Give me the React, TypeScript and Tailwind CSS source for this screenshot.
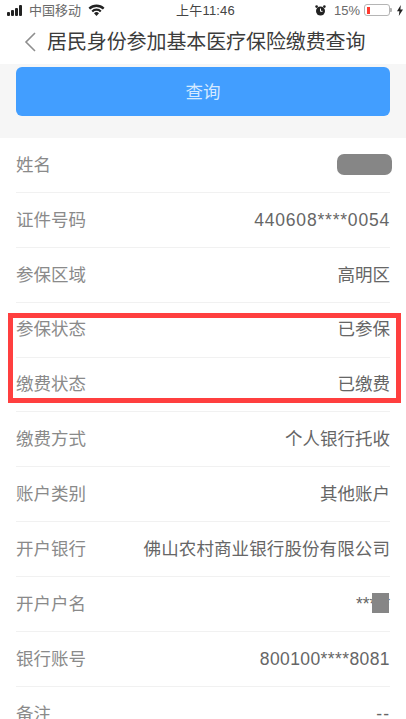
import React from "react";

const rows: { label: string; value: string; mask?: string; tracking?: string }[] = [
  { label: "姓名", value: "", mask: "name" },
  { label: "证件号码", value: "440608****0054", tracking: "tracking-[0.8px]" },
  { label: "参保区域", value: "高明区" },
  { label: "参保状态", value: "已参保" },
  { label: "缴费状态", value: "已缴费" },
  { label: "缴费方式", value: "个人银行托收" },
  { label: "账户类别", value: "其他账户" },
  { label: "开户银行", value: "佛山农村商业银行股份有限公司", tracking: "tracking-[0.1px]" },
  { label: "开户户名", value: "*****", mask: "holder" },
  { label: "银行账号", value: "800100****8081", tracking: "tracking-[0.4px]" },
  { label: "备注", value: "--", tracking: "tracking-[1px]" },
];

const StatusBar = () => (
  <div className="h-[20px] flex items-center pl-[7px] pr-[3px] text-[14px] leading-none text-[#6a6a6a]">
    <div className="flex items-end gap-[1px] h-[11px]">
      <span className="w-[3px] h-[4px] rounded-[1px] bg-[#222]" />
      <span className="w-[3px] h-[6px] rounded-[1px] bg-[#222]" />
      <span className="w-[3px] h-[8px] rounded-[1px] bg-[#222]" />
      <span className="w-[3px] h-[11px] rounded-[1px] bg-[#222]" />
    </div>
    <span className="ml-[7px] text-[13px]">中国移动</span>
    <svg className="ml-[7px]" width="17" height="12" viewBox="0 0 17 12">
      <path d="M.5 3.8a11.5 11.5 0 0 1 16 0l-1.6 1.7a9.2 9.2 0 0 0-12.8 0z" fill="#222" />
      <path d="M3.4 6.7a7.3 7.3 0 0 1 10.2 0L12 8.3a5 5 0 0 0-7 0z" fill="#222" />
      <path d="M6 9.3a3.6 3.6 0 0 1 5 0l-2.5 2.6z" fill="#222" />
    </svg>
    <span className="ml-[71px] text-[#444] text-[13px] tracking-[0.2px]">上午11:46</span>
    <div className="ml-auto flex items-center">
      <svg width="11" height="11" viewBox="0 0 11 11">
        <circle cx="5.5" cy="6" r="4.5" fill="#222" />
        <circle cx="1.6" cy="1.6" r="1.3" fill="#222" />
        <circle cx="9.4" cy="1.6" r="1.3" fill="#222" />
        <path d="M5.5 3.5V6.3H7.5" stroke="#fff" strokeWidth="1" fill="none" />
      </svg>
      <span className="ml-[8px] text-[13px]">15%</span>
      <div className="ml-[4px] w-[26px] h-[12px] rounded-[3px] border border-[#b5b5b5] p-[1.5px]">
        <div className="w-[3px] h-full bg-[#ff3b30]" />
      </div>
      <span className="w-[2px] h-[4px] bg-[#b5b5b5] rounded-r-[1px] mr-[5px]" />
      <svg width="6" height="11" viewBox="0 0 6 11">
        <path d="M3.8 0 0 6.2h2.4L1.8 11 6 4.6H3.4z" fill="#222" />
      </svg>
    </div>
  </div>
);

const Header = () => (
  <div className="h-[44px] flex items-center">
    <svg className="ml-[24px]" width="12" height="20" viewBox="0 0 12 20">
      <path d="M11 1 2 10l9 9" stroke="#8e8e8e" strokeWidth="1.6" fill="none" />
    </svg>
    <h1 className="ml-[11px] text-[20px] leading-none font-normal text-[#3c3c3c] tracking-[-0.1px] whitespace-nowrap">
      居民身份参加基本医疗保险缴费查询
    </h1>
  </div>
);

export default function App() {
  return (
    <div
      className="relative w-[406px] h-[719px] overflow-hidden bg-white"
      style={{ fontFamily: '"Liberation Sans", "Noto Sans CJK SC", sans-serif' }}
    >
      <StatusBar />
      <Header />
      <div className="h-[74px] bg-[#f6f6f6] px-[16px] pt-[3px]">
        <button className="w-full h-[49px] pt-[1px] rounded-[6px] bg-[#429eff] text-[#d5e9ff] text-[17.5px]">
          查询
        </button>
      </div>
      <div className="px-[16px]">
        {rows.map((row) => (
          <div
            key={row.label}
            className="h-[54.9px] flex items-center justify-between border-b border-[#f1f1f1] last:border-b-0 text-[17.5px]"
          >
            <span className="text-[#8a8a8a]">{row.label}</span>
            {row.mask === "name" ? (
              <span className="w-[55px] h-[21px] -mr-[2px] rounded-[7px] bg-[#868686]" />
            ) : row.mask === "holder" ? (
              <span className="relative text-[#666]">
                {row.value}
                <span className="absolute right-[1px] top-[2px] w-[17px] h-[20px] bg-[#868686]" />
              </span>
            ) : (
              <span className={`text-[#666] ${row.tracking ?? ""}`}>{row.value}</span>
            )}
          </div>
        ))}
      </div>
      <div className="absolute left-[8px] top-[313px] w-[393px] h-[90px] border-[5px] border-[#ff3f3f]" />
    </div>
  );
}
